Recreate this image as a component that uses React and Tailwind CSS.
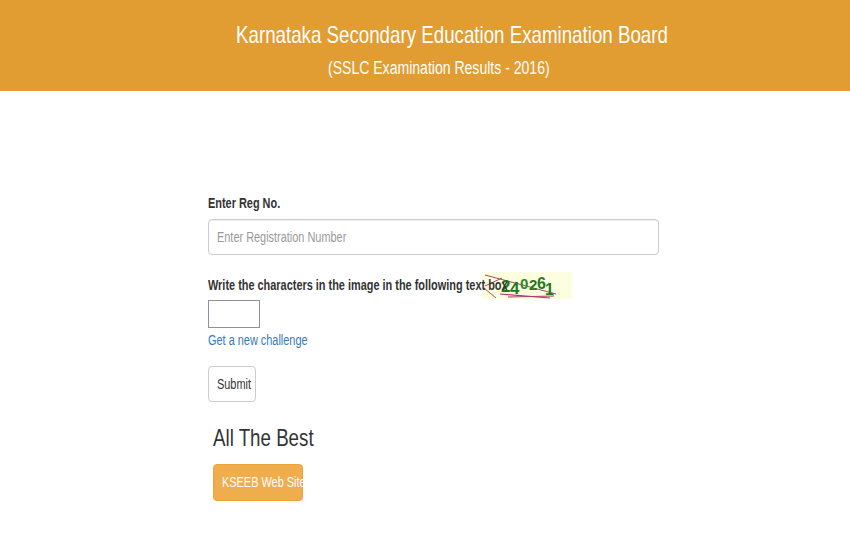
function Squeezed({ children, className = "" }) {
  return <span className={"inline-block whitespace-nowrap origin-left scale-x-[0.78] " + className}>{children}</span>;
}

function Captcha() {
  return (
    <div className="w-[90px] h-[27px] bg-[#fdfde0] ml-[2px]">
      <svg width="90" height="27" viewBox="0 0 90 27" fontFamily="'Liberation Sans', sans-serif" fontWeight="700">
        <path d="M3 14 L20 6" stroke="#a84a6a" strokeWidth="1" fill="none" />
        <path d="M2 16 L14 26" stroke="#a84a6a" strokeWidth="1" fill="none" />
        <path d="M3 3 L74 22" stroke="#a8486a" strokeWidth="1" fill="none" />
        <path d="M18 22 L68 26" stroke="#b03a70" strokeWidth="1.2" fill="none" />
        <path d="M26 25 L72 24" stroke="#b03a70" strokeWidth="1" fill="none" />
        <text x="19" y="20" fontSize="17" fill="#1f7a1f">2</text>
        <text x="28" y="22" fontSize="17" fill="#1f7a1f">4</text>
        <text x="38" y="17" fontSize="15" fill="#2a8a2a">0</text>
        <text x="47" y="18" fontSize="15" fill="#1f7a1f">2</text>
        <text x="55" y="17" fontSize="16" fill="#1f7a1f">6</text>
        <text x="63" y="23" fontSize="16" fill="#1f7a1f">1</text>
      </svg>
    </div>
  );
}

export default function App() {
  return (
    <div className="w-[850px] h-[550px] bg-white overflow-hidden font-['Liberation_Sans',Arial,sans-serif] text-[#333]">
      <header className="h-[91px] bg-[#e19c32] text-white flex flex-col items-center">
        <div className="mt-[19px] h-[32px] w-[378px] text-[24px] leading-[32px]">
          <span className="inline-block whitespace-nowrap origin-left scale-x-[0.78]">Karnataka Secondary Education Examination Board</span>
        </div>
        <div className="mt-[3px] h-[28px] w-[194px] text-[18px] leading-[28px]">
          <span className="inline-block whitespace-nowrap origin-left scale-x-[0.78]">(SSLC Examination Results - 2016)</span>
        </div>
      </header>

      <main className="ml-[208px] w-[451px] pt-[103px]">
        <label className="block h-[18px] text-[14px] leading-[18px] font-bold">
          <Squeezed>Enter Reg No.</Squeezed>
        </label>
        <div className="mt-[7px] h-[36px] w-[451px] rounded-[4px] border border-[#ccc] shadow-[inset_0_1px_1px_rgba(0,0,0,0.075)] px-[8px] flex items-center text-[14px] text-[#999]">
          <Squeezed>Enter Registration Number</Squeezed>
        </div>

        <div className="mt-[17px] flex items-center h-[27px]">
          <label className="w-[272px] text-[14px] font-bold">
            <Squeezed>Write the characters in the image in the following text box</Squeezed>
          </label>
          <Captcha />
        </div>
        <div className="mt-[1px] h-[28px] w-[52px] border border-[#8f8f9d]"></div>
        <a className="block mt-[2px] h-[20px] text-[14px] leading-[20px] text-[#337ab7]">
          <Squeezed>Get a new challenge</Squeezed>
        </a>

        <button className="block mt-[16px] h-[36px] w-[48px] rounded-[4px] border border-[#ccc] text-[14px] text-[#333] pl-[8px] text-left">
          <Squeezed>Submit</Squeezed>
        </button>

        <div className="mt-[21px] ml-[5px] h-[30px] text-[24px] leading-[30px] text-[#333]">
          <Squeezed>All The Best</Squeezed>
        </div>
        <a className="flex items-center mt-[11px] ml-[5px] h-[37px] w-[90px] rounded-[4px] bg-[#f0ad4e] border border-[#eea236] text-white text-[14px] pl-[8px]">
          <Squeezed>KSEEB Web Site</Squeezed>
        </a>
      </main>
    </div>
  );
}
